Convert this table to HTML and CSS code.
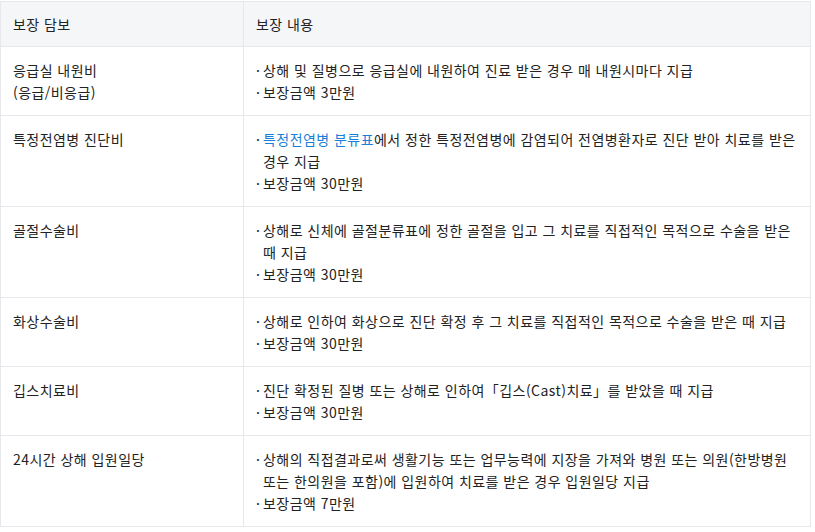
FILE: index.html
```html
<!DOCTYPE html>
<html lang="ko">
<head>
    <meta charset="UTF-8">
    <meta name="viewport" content="width=device-width, initial-scale=1.0">
    <title>보장 내용</title>
    <link rel="stylesheet" href="styles.css">
</head>
<body>
    <table class="cover-table">
        <colgroup>
            <col class="col-name">
            <col class="col-desc">
        </colgroup>
        <thead>
            <tr>
                <th>보장 담보</th>
                <th>보장 내용</th>
            </tr>
        </thead>
        <tbody>
            <tr>
                <td>응급실 내원비<br>(응급/비응급)</td>
                <td>
                    <ul class="desc-list">
                        <li>상해 및 질병으로 응급실에 내원하여 진료 받은 경우 매 내원시마다 지급</li>
                        <li>보장금액 3만원</li>
                    </ul>
                </td>
            </tr>
            <tr>
                <td>특정전염병 진단비</td>
                <td>
                    <ul class="desc-list">
                        <li><a href="#" class="link">특정전염병 분류표</a>에서 정한 특정전염병에 감염되어 전염병환자로 진단 받아 치료를 받은 경우 지급</li>
                        <li>보장금액 30만원</li>
                    </ul>
                </td>
            </tr>
            <tr>
                <td>골절수술비</td>
                <td>
                    <ul class="desc-list">
                        <li>상해로 신체에 골절분류표에 정한 골절을 입고 그 치료를 직접적인 목적으로 수술을 받은 때 지급</li>
                        <li>보장금액 30만원</li>
                    </ul>
                </td>
            </tr>
            <tr>
                <td>화상수술비</td>
                <td>
                    <ul class="desc-list">
                        <li>상해로 인하여 화상으로 진단 확정 후 그 치료를 직접적인 목적으로 수술을 받은 때 지급</li>
                        <li>보장금액 30만원</li>
                    </ul>
                </td>
            </tr>
            <tr>
                <td>깁스치료비</td>
                <td>
                    <ul class="desc-list">
                        <li>진단 확정된 질병 또는 상해로 인하여「깁스(Cast)치료」를 받았을 때 지급</li>
                        <li>보장금액 30만원</li>
                    </ul>
                </td>
            </tr>
            <tr>
                <td>24시간 상해 입원일당</td>
                <td>
                    <ul class="desc-list">
                        <li>상해의 직접결과로써 생활기능 또는 업무능력에 지장을 가져와 병원 또는 의원(한방병원 또는 한의원을 포함)에 입원하여 치료를 받은 경우 입원일당 지급</li>
                        <li>보장금액 7만원</li>
                    </ul>
                </td>
            </tr>
        </tbody>
    </table>
</body>
</html>
```

FILE: styles.css
```css
* {
    margin: 0;
    padding: 0;
    box-sizing: border-box;
}

body {
    font-family: "Noto Sans CJK KR", "Noto Sans", sans-serif;
    font-size: 14px;
    letter-spacing: 0.45px;
    color: #222;
    background: #fff;
    padding-top: 1px;
}

/* 보장 테이블 */
.cover-table {
    width: 811px;
    border-collapse: collapse;
    table-layout: fixed;
    border: 1px solid #e6e8eb;
}

.col-name {
    width: 243px;
}

.cover-table th,
.cover-table td {
    padding: 12px;
    line-height: 22px;
    text-align: left;
    vertical-align: top;
    font-weight: normal;
    word-break: keep-all;
    border-bottom: 1px solid #e6e8eb;
}

.cover-table th + th,
.cover-table td + td {
    border-left: 1px solid #e6e8eb;
}

.cover-table thead th {
    padding: 11px 12px;
    background: #f5f6f8;
}

.desc-list {
    list-style: none;
}

.desc-list li {
    padding-left: 7px;
    text-indent: -7px;
}

.desc-list li::before {
    content: '·';
    display: inline-block;
    width: 7px;
    text-indent: 0;
}

.link {
    color: #1a7fd8;
    text-decoration: none;
}
```
